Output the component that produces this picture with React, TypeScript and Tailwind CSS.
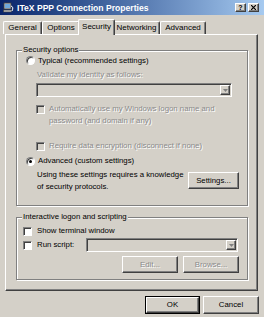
import React from "react";

const raised =
  "border border-t-white border-l-white border-r-[#404040] border-b-[#404040] shadow-[inset_-1px_-1px_0_#808080]";
const sunken =
  "border border-t-[#808080] border-l-[#808080] border-r-white border-b-white shadow-[inset_1px_1px_0_#404040]";
const etched = "border border-[#808080] shadow-[inset_1px_1px_0_#fff,1px_1px_0_#fff]";
const dis = "text-[#8a8a8a] [text-shadow:1px_1px_0_#fff]";

function Radio({ checked }: { checked?: boolean }) {
  return (
    <span
      className={`w-[9px] h-[9px] shrink-0 rounded-full bg-white border border-t-[#808080] border-l-[#808080] border-r-white border-b-white shadow-[inset_1px_1px_0_#404040] flex items-center justify-center`}
    >
      {checked && <span className="w-[3px] h-[3px] rounded-full bg-black" />}
    </span>
  );
}

function Check({ disabled }: { disabled?: boolean }) {
  return <span className={`block w-[9px] h-[9px] shrink-0 ${sunken} ${disabled ? "bg-[#d4d0c8]" : "bg-white"}`} />;
}

function Combo({ className }: { className: string }) {
  return (
    <div className={`h-[14px] bg-[#d4d0c8] ${sunken} flex justify-end items-stretch p-[1px] ${className}`}>
      <div className={`w-[10px] bg-[#d4d0c8] ${raised} flex items-center justify-center`}>
        <svg width="5" height="3" viewBox="0 0 5 3">
          <path d="M0 0H5L2.5 3Z" fill="#808080" />
        </svg>
      </div>
    </div>
  );
}

function Btn({ children, className, disabled }: { children: React.ReactNode; className: string; disabled?: boolean }) {
  return (
    <div className={`bg-[#d4d0c8] ${raised} flex items-center justify-center ${disabled ? dis : "text-black"} ${className}`}>
      {children}
    </div>
  );
}

function Tab({ label, w, selected }: { label: string; w: string; selected?: boolean }) {
  return (
    <div
      className={`${w} flex items-center justify-center bg-[#d4d0c8] border-t border-l border-r border-t-white border-l-white border-r-[#404040] shadow-[inset_-1px_0_0_#808080] rounded-t-[2px] ${
        selected ? "relative z-10 h-[16px] -mx-[2px] -mb-[1px] pb-[2px]" : "h-[13px]"
      }`}
    >
      {label}
    </div>
  );
}

export default function App() {
  return (
    <div
      className="w-[264px] h-[317px] bg-[#d4d0c8] text-black text-[7.8px] leading-[10px] overflow-hidden flex flex-col"
      style={{ fontFamily: '"Liberation Sans", Arial, sans-serif' }}
    >
      {/* Title bar */}
      <div className="h-[15px] shrink-0 bg-gradient-to-r from-[#0a246a] to-[#a6caf0] flex items-center pl-[3px] pr-[5px]">
        <svg width="11" height="11" viewBox="0 0 11 11" className="shrink-0">
          <rect x="1" y="1" width="7" height="6" fill="#c0c0c0" stroke="#404040" strokeWidth="0.8" />
          <rect x="2" y="2" width="5" height="4" fill="#6fa8dc" />
          <rect x="0.5" y="8" width="8" height="2" fill="#c0c0c0" stroke="#404040" strokeWidth="0.6" />
          <path d="M8 4 Q11 5 9 9" stroke="#ffffff" strokeWidth="1" fill="none" />
        </svg>
        <span className="ml-[3px] text-white font-bold text-[8.6px] leading-[10px]">ITeX PPP Connection Properties</span>
        <div className="ml-auto flex gap-[1px]">
          <div className={`w-[11px] h-[9px] bg-[#d4d0c8] ${raised} flex items-center justify-center text-[7px] font-bold leading-[7px]`}>?</div>
          <div className={`w-[11px] h-[9px] ml-[1px] bg-[#d4d0c8] ${raised} flex items-center justify-center`}>
            <svg width="5" height="5" viewBox="0 0 5 5">
              <path d="M0 0L5 5M5 0L0 5" stroke="#000" strokeWidth="1.2" />
            </svg>
          </div>
        </div>
      </div>

      {/* Tabs */}
      <div className="h-[19px] shrink-0 flex items-end pl-[3px] text-[8px]">
        <Tab label="General" w="w-[39px]" />
        <Tab label="Options" w="w-[38px]" />
        <Tab label="Security" w="w-[37px]" selected />
        <Tab label="Networking" w="w-[47px]" />
        <Tab label="Advanced" w="w-[46px]" />
      </div>

      {/* Panel */}
      <div className="ml-[5px] w-[253px] h-[257px] shrink-0 border border-t-white border-l-white border-r-[#404040] border-b-[#404040] shadow-[inset_-1px_-1px_0_#808080] flex flex-col">
        {/* Group 1 */}
        <div className={`relative mt-[15px] ml-[10px] w-[232px] h-[156px] ${etched} flex flex-col`}>
          <span className="absolute -top-[6px] left-[5px] px-[1px] bg-[#d4d0c8]">Security options</span>
          <div className="mt-[4px] ml-[9px] h-[11px] flex items-center gap-[3px]">
            <Radio />
            <span>Typical (recommended settings)</span>
          </div>
          <div className={`mt-[4px] ml-[20px] h-[10px] flex items-center ${dis}`}>Validate my identity as follows:</div>
          <Combo className="mt-[3px] ml-[19px] w-[196px]" />
          <div className="mt-[6px] ml-[19px] flex items-start gap-[4px]">
            <div className="mt-[2px]">
              <Check disabled />
            </div>
            <span className={`leading-[12px] ${dis}`}>
              Automatically use my Windows logon name and
              <br />
              password (and domain if any)
            </span>
          </div>
          <div className="mt-[13px] ml-[19px] h-[12px] flex items-center gap-[4px]">
            <Check disabled />
            <span className={dis}>Require data encryption (disconnect if none)</span>
          </div>
          <div className="mt-[3px] ml-[9px] h-[12px] flex items-center gap-[3px]">
            <Radio checked />
            <span>Advanced (custom settings)</span>
          </div>
          <div className="mt-[2px] ml-[20px] flex items-start">
            <span className="leading-[12px]">
              Using these settings requires a knowledge
              <br />
              of security protocols.
            </span>
            <Btn className="ml-auto mr-[8px] mt-[3px] w-[51px] h-[17px]">Settings...</Btn>
          </div>
        </div>

        {/* Group 2 */}
        <div className={`relative mt-[11px] ml-[10px] w-[232px] h-[63px] ${etched} flex flex-col`}>
          <span className="absolute -top-[6px] left-[5px] px-[1px] bg-[#d4d0c8]">Interactive logon and scripting</span>
          <div className="mt-[7px] ml-[6px] h-[12px] flex items-center gap-[5px]">
            <Check />
            <span>Show terminal window</span>
          </div>
          <div className="mt-[1px] ml-[6px] h-[14px] flex items-center">
            <Check />
            <span className="ml-[5px]">Run script:</span>
            <Combo className="ml-auto mr-[9px] w-[152px]" />
          </div>
          <div className="mt-[4px] flex justify-end gap-[5px] mr-[8px]">
            <Btn disabled className="w-[56px] h-[17px]">Edit...</Btn>
            <Btn disabled className="w-[56px] h-[17px]">Browse...</Btn>
          </div>
        </div>
      </div>

      {/* Bottom buttons */}
      <div className="mt-[5px] flex pl-[145px] gap-[3px]">
        <div className="w-[55px] h-[18px] border border-black">
          <Btn className="w-full h-full">OK</Btn>
        </div>
        <Btn className="w-[56px] h-[18px]">Cancel</Btn>
      </div>
    </div>
  );
}
